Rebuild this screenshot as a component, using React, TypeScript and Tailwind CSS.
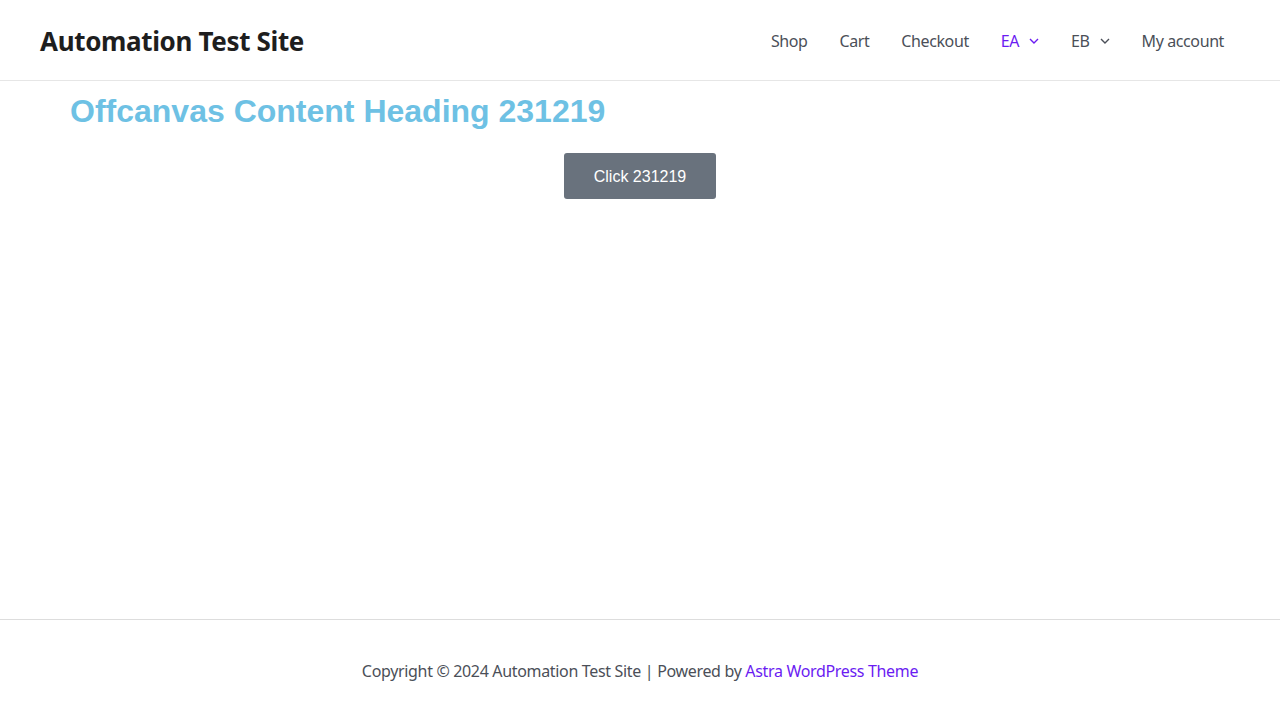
import React from 'react';

const navItems = [
  { label: 'Shop' },
  { label: 'Cart' },
  { label: 'Checkout' },
  { label: 'EA', sub: true, active: true },
  { label: 'EB', sub: true },
  { label: 'My account' },
];

const Chevron = () => (
  <svg width="10" height="6" viewBox="0 0 10 6" fill="none" className="ml-[10px]">
    <path d="M1 1l4 4 4-4" stroke="currentColor" strokeWidth="1.4" />
  </svg>
);

const App = () => {
  return (
    <div className="min-h-[720px] flex flex-col bg-white font-['Noto_Sans',sans-serif] text-[#4b4f58]">
      <header className="h-[81px] px-10 pt-[2px] flex items-center justify-between border-b border-[#e6e6e6]">
        <div className="text-[26px] font-bold text-[#1e1e1e] tracking-[-0.35px]">Automation Test Site</div>
        <nav className="flex items-center h-full">
          {navItems.map((item) => (
            <a
              key={item.label}
              className={`flex items-center h-full px-4 text-[16px] tracking-[-0.4px] ${item.active ? 'text-[#6b1cf2]' : 'text-[#4b4f58]'}`}
            >
              {item.label}
              {item.sub && <Chevron />}
            </a>
          ))}
        </nav>
      </header>

      <main className="flex-1 h-[538px] px-[70px] pt-[11px]">
        <h2 className="text-[32px] leading-[1.2] font-bold text-[#6ec1e4] font-['Liberation_Sans',Arial,sans-serif]">
          Offcanvas Content Heading 231219
        </h2>
        <div className="flex justify-center mt-[23px]">
          <button className="h-[46px] px-[30px] pt-[1px] rounded-[3px] bg-[#69727d] text-white text-[16px] font-['Liberation_Sans',Arial,sans-serif]">
            Click 231219
          </button>
        </div>
      </main>

      <footer className="h-[101px] pt-[2px] border-t border-[#dddddd] flex items-center justify-center text-[16px] tracking-[-0.33px]">
        <p>
          Copyright © 2024 Automation Test Site | Powered by{' '}
          <a className="text-[#6b1cf2]">Astra WordPress Theme</a>
        </p>
      </footer>
    </div>
  );
};

export default App;
